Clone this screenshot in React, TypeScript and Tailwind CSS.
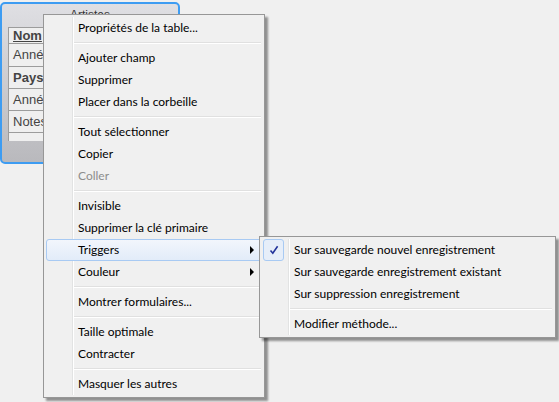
import React from "react";

type Item =
  | { sep: true }
  | { label: string; disabled?: boolean; active?: boolean; sub?: boolean; checked?: boolean };

const mainMenu: Item[] = [
  { label: "Propriétés de la table..." },
  { sep: true },
  { label: "Ajouter champ" },
  { label: "Supprimer" },
  { label: "Placer dans la corbeille" },
  { sep: true },
  { label: "Tout sélectionner" },
  { label: "Copier" },
  { label: "Coller", disabled: true },
  { sep: true },
  { label: "Invisible" },
  { label: "Supprimer la clé primaire" },
  { label: "Triggers", active: true, sub: true },
  { label: "Couleur", sub: true },
  { sep: true },
  { label: "Montrer formulaires..." },
  { sep: true },
  { label: "Taille optimale" },
  { label: "Contracter" },
  { sep: true },
  { label: "Masquer les autres" },
];

const triggersMenu: Item[] = [
  { label: "Sur sauvegarde nouvel enregistrement", checked: true },
  { label: "Sur sauvegarde enregistrement existant" },
  { label: "Sur suppression enregistrement" },
  { sep: true },
  { label: "Modifier méthode..." },
];

function Check() {
  return (
    <svg width="10" height="10" viewBox="0 0 10 10">
      <path d="M1.5 5.5 L3.8 8.2 L8.6 1.2" fill="none" stroke="#22339a" strokeWidth="1.6" />
    </svg>
  );
}

function Menu({ items, className }: { items: Item[]; className: string }) {
  return (
    <div
      className={`absolute flex flex-col border border-[#979797] bg-[#f0f0f0] p-[2px] shadow-[3px_3px_2px_rgba(0,0,0,0.4)] ${className}`}
    >
      {/* gutter line */}
      <div className="absolute left-[28px] top-[2px] bottom-[2px] w-[1px] bg-[#e2e3e3]" />
      <div className="absolute left-[29px] top-[2px] bottom-[2px] w-[1px] bg-white" />
      {items.map((it, i) => {
        if ("sep" in it) {
          return (
            <div key={i} className="flex h-[8px] flex-col justify-center pl-[27px] pr-[1px]">
              <div className="h-[1px] bg-[#e0e0e0]" />
              <div className="h-[1px] bg-white" />
            </div>
          );
        }
        return (
          <div
            key={i}
            className={`relative flex h-[22px] items-center ${
              it.active
                ? "rounded-[3px] border border-[#a8caf3] bg-gradient-to-b from-[#f2f6fc] to-[#e2ecf9] pl-[31px] pr-[7px]"
                : "pl-[32px] pr-[8px]"
            } ${it.disabled ? "text-[#8d8d8d]" : "text-black"}`}
          >
            {it.checked && (
              <div className="absolute left-[1px] top-0 flex h-[22px] w-[21px] items-center justify-center rounded-[3px] border border-[#a8caf3] bg-[#e6eef9]">
                <Check />
              </div>
            )}
            <span className="flex-1 whitespace-nowrap">{it.label}</span>
            {it.sub && (
              <span className="h-0 w-0 border-y-[4px] border-l-[4px] border-y-transparent border-l-black" />
            )}
          </div>
        );
      })}
    </div>
  );
}

export default function App() {
  const rows = [
    { label: "Nom", bold: true, underline: true, h: "h-[16px]" },
    { label: "Année de naissance", h: "h-[23px]" },
    { label: "Pays", bold: true, h: "h-[22px]" },
    { label: "Année de décès", h: "h-[22px]" },
    { label: "Notes", h: "h-[22px]" },
  ];

  return (
    <div className="relative h-[402px] w-[559px] overflow-hidden bg-[#f0f0f0] font-['Lato',sans-serif] text-[12px] leading-[14px]">
      {/* table window */}
      <div className="mt-[2px] h-[162px] w-[180px] overflow-hidden rounded-[5px] border-2 border-[#3d9cf2] bg-gradient-to-b from-[#dfdfe3] to-[#b9b9bd]">
        <div className="pt-[4px] text-center font-['Liberation_Sans',sans-serif] text-[12px] text-[#333]">
          Artistes
        </div>
        <div className="ml-[6px] mt-[5px] w-[200px] border-l border-t border-[#9c9c9c] bg-[#efefef] font-['Liberation_Sans',sans-serif] text-[13px] text-[#444]">
          {rows.map((r) => (
            <div
              key={r.label}
              className={`flex items-center border-b border-[#9c9c9c] pl-[4px] ${r.h} ${
                r.bold ? "font-bold" : ""
              } ${r.underline ? "underline" : ""}`}
            >
              {r.label}
            </div>
          ))}
          <div className="h-[8px]" />
        </div>
      </div>

      <Menu items={mainMenu} className="left-[43px] top-[14px] w-[222px]" />
      <Menu items={triggersMenu} className="left-[259px] top-[236px] w-[297px]" />
    </div>
  );
}
